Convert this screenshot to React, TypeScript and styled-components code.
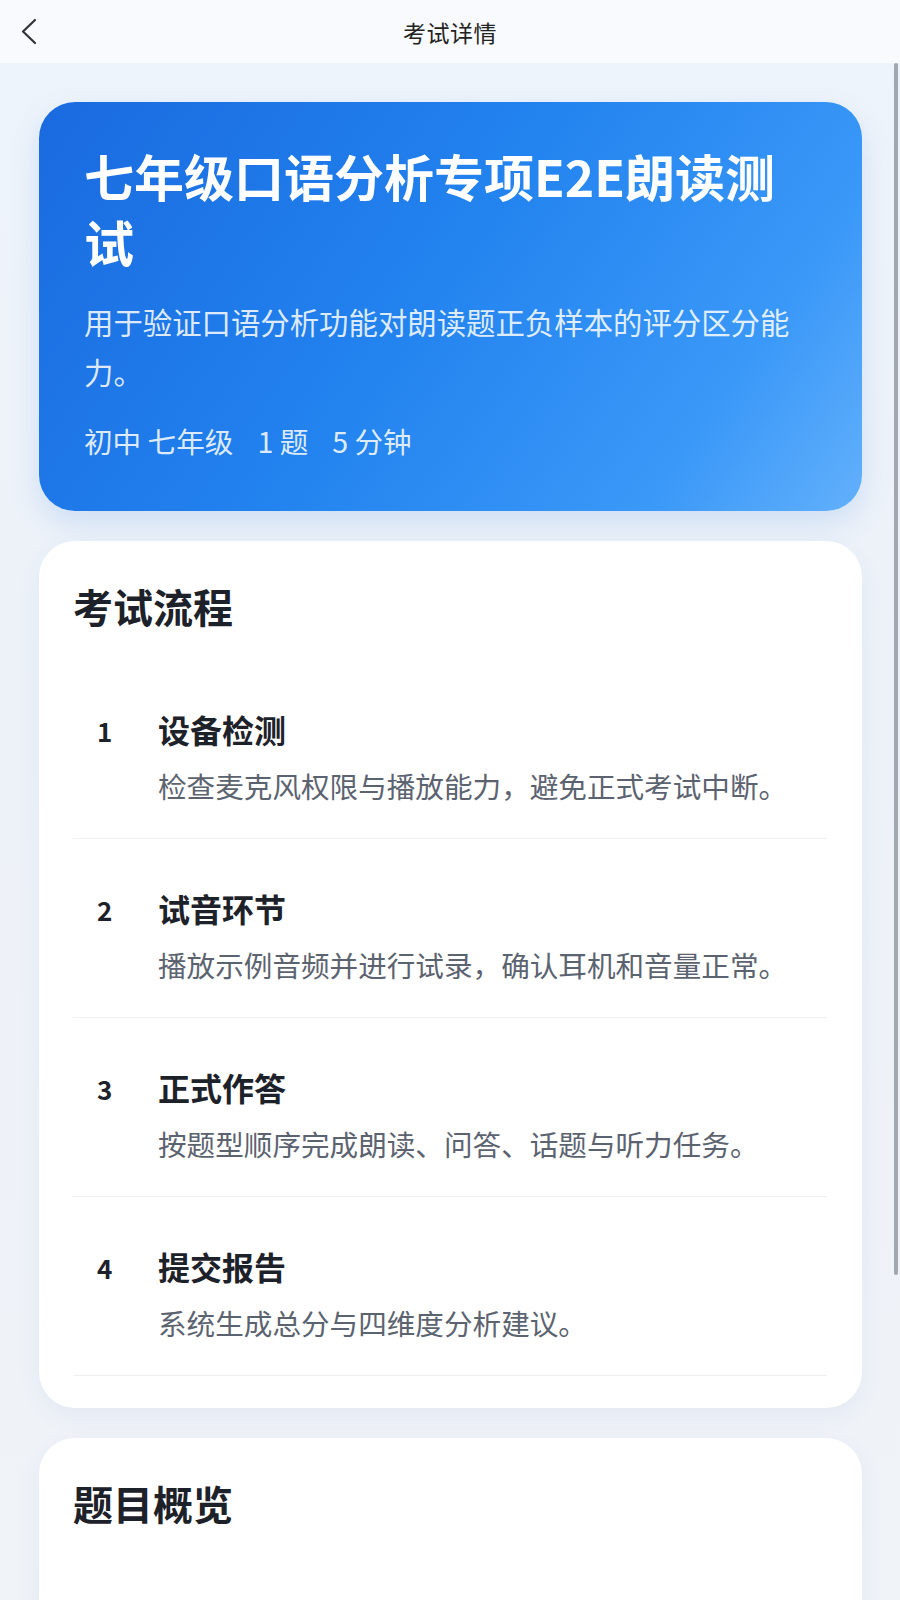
import React from "react";
import styled, { createGlobalStyle } from "styled-components";

const GlobalStyle = createGlobalStyle`
  html, body {
    margin: 0;
    padding: 0;
    background: #eef3f9;
  }
  body {
    font-family: "Noto Sans CJK SC", "Noto Sans", sans-serif;
    -webkit-font-smoothing: antialiased;
  }
  * { box-sizing: border-box; }
`;

const Page = styled.div`
  position: relative;
  width: 900px;
  min-height: 1600px;
  overflow: hidden;
  background: linear-gradient(180deg, #eef4fb 0%, #edf2f8 40%, #f0f3f8 100%);
`;

const Header = styled.header`
  height: 63px;
  display: grid;
  grid-template-columns: 80px 1fr 80px;
  align-items: center;
  background: #f8fafd;
`;

const BackButton = styled.button`
  border: none;
  background: transparent;
  padding: 0 0 0 20px;
  height: 63px;
  display: flex;
  align-items: center;
  cursor: pointer;
`;

const HeaderTitle = styled.h1`
  margin: 0;
  text-align: center;
  font-size: 23px;
  font-weight: 400;
  color: #222;
  letter-spacing: 0.5px;
`;

const Content = styled.main`
  display: flex;
  flex-direction: column;
  gap: 30px;
  padding: 39px 38px 0 39px;
`;

const Hero = styled.section`
  border-radius: 36px;
  padding: 40px 56px 50px 45px;
  background: linear-gradient(125deg, #1a6adf 0%, #2282ee 45%, #3a98f8 80%, #62b0fb 100%);
  box-shadow: 0 12px 30px rgba(40, 120, 230, 0.16);
  color: #fff;
`;

const HeroTitle = styled.h2`
  margin: 0;
  font-size: 50px;
  line-height: 66px;
  font-weight: 700;
`;

const HeroDesc = styled.p`
  margin: 22px 0 0;
  font-size: 29.4px;
  line-height: 50px;
  color: rgba(255, 255, 255, 0.86);
`;

const MetaRow = styled.div`
  margin-top: 25px;
  display: flex;
  gap: 24px;
  font-size: 28.6px;
  line-height: 40px;
  color: rgba(255, 255, 255, 0.86);
`;

const Card = styled.section`
  background: #fff;
  border-radius: 36px;
  padding: 37px 35px 32px 34px;
  box-shadow: 0 8px 26px rgba(40, 80, 150, 0.06);
`;

const CardTitle = styled.h3`
  margin: 0;
  font-size: 40px;
  line-height: 56px;
  font-weight: 700;
  color: #1d2129;
`;

const StepList = styled.ol`
  list-style: none;
  margin: 26px 0 0;
  padding: 0;
`;

const StepItem = styled.li`
  display: grid;
  grid-template-columns: 61px 1fr;
  grid-template-rows: 44px 40px;
  row-gap: 15px;
  padding: 47px 0 32px 24px;
  border-bottom: 1px solid #eef0f3;
`;

const StepNum = styled.span`
  font-size: 26px;
  font-weight: 700;
  color: #1d2129;
  line-height: 44px;
  padding-top: 2px;
`;

const StepTitle = styled.span`
  font-size: 32px;
  font-weight: 700;
  line-height: 44px;
  color: #1d2129;
`;

const StepDesc = styled.span`
  grid-column: 2;
  font-size: 28.6px;
  line-height: 40px;
  color: #5c6370;
`;

const EmptyBody = styled.div`
  height: 120px;
`;

const ScrollThumb = styled.div`
  position: absolute;
  right: 2px;
  top: 63px;
  width: 4px;
  height: 1212px;
  border-radius: 2px;
  background: #a2a8b0;
`;

const steps = [
  { n: 1, title: "设备检测", desc: "检查麦克风权限与播放能力，避免正式考试中断。" },
  { n: 2, title: "试音环节", desc: "播放示例音频并进行试录，确认耳机和音量正常。" },
  { n: 3, title: "正式作答", desc: "按题型顺序完成朗读、问答、话题与听力任务。" },
  { n: 4, title: "提交报告", desc: "系统生成总分与四维度分析建议。" },
];

export default function App() {
  return (
    <>
      <GlobalStyle />
      <Page>
        <Header>
          <BackButton aria-label="返回">
            <svg width="18" height="27" viewBox="0 0 18 27" fill="none">
              <polyline
                points="15,2 3,13.5 15,25"
                stroke="#333"
                strokeWidth="2.2"
                strokeLinecap="round"
                strokeLinejoin="round"
              />
            </svg>
          </BackButton>
          <HeaderTitle>考试详情</HeaderTitle>
          <span />
        </Header>
        <Content>
          <Hero>
            <HeroTitle>七年级口语分析专项E2E朗读测试</HeroTitle>
            <HeroDesc>用于验证口语分析功能对朗读题正负样本的评分区分能力。</HeroDesc>
            <MetaRow>
              <span>初中 七年级</span>
              <span>1 题</span>
              <span>5 分钟</span>
            </MetaRow>
          </Hero>
          <Card>
            <CardTitle>考试流程</CardTitle>
            <StepList>
              {steps.map((s) => (
                <StepItem key={s.n}>
                  <StepNum>{s.n}</StepNum>
                  <StepTitle>{s.title}</StepTitle>
                  <StepDesc>{s.desc}</StepDesc>
                </StepItem>
              ))}
            </StepList>
          </Card>
          <Card>
            <CardTitle>题目概览</CardTitle>
            <EmptyBody />
          </Card>
        </Content>
        <ScrollThumb />
      </Page>
    </>
  );
}
